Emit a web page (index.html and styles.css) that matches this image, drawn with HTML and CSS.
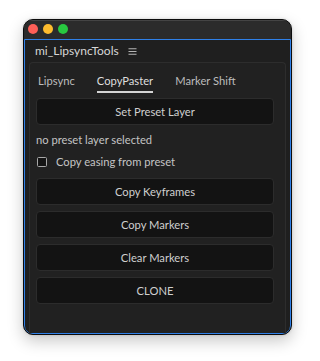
FILE: index.html
```html
<!DOCTYPE html>
<html lang="en">
<head>
<meta charset="utf-8">
<title>mi_LipsyncTools</title>
<link rel="stylesheet" href="styles.css">
</head>
<body>
<div class="stage">
  <div class="window">
    <div class="titlebar">
      <span class="light red"></span>
      <span class="light yellow"></span>
      <span class="light green"></span>
    </div>
    <div class="frame">
      <div class="panel-header">
        <span class="panel-title">mi_LipsyncTools</span>
        <svg class="menu-icon" width="9" height="7" viewBox="0 0 9 7">
          <path d="M0.5 0.75H8.5M0.5 3.5H8.5M0.5 6.25H8.5" stroke="#b4b4b4" stroke-width="1.1" fill="none"/>
        </svg>
      </div>
      <div class="content">
        <div class="tabs">
          <span class="tab">Lipsync</span>
          <span class="tab active">CopyPaster</span>
          <span class="tab">Marker Shift</span>
        </div>
        <button class="btn first">Set Preset Layer</button>
        <div class="status">no preset layer selected</div>
        <label class="check-row">
          <span class="checkbox"></span>
          <span class="check-label">Copy easing from preset</span>
        </label>
        <button class="btn after-check">Copy Keyframes</button>
        <button class="btn">Copy Markers</button>
        <button class="btn">Clear Markers</button>
        <button class="btn">CLONE</button>
      </div>
    </div>
  </div>
</div>
</body>
</html>
```

FILE: styles.css
```css
html, body {
  margin: 0;
  padding: 0;
  background: #ffffff;
}

body {
  font-family: "Lato", "Noto Sans", sans-serif;
  font-size: 11.2px;
  width: 315px;
  height: 361px;
  overflow: hidden;
}

.stage {
  padding: 19px 0 0 23px;
}

.window {
  width: 267px;
  height: 314px;
  border: 1px solid #0c0c0c;
  border-radius: 10px;
  background: #2a2a2a;
  box-shadow: 0 6px 16px rgba(0, 0, 0, 0.22), 0 0 3px rgba(0, 0, 0, 0.15);
  display: flex;
  flex-direction: column;
  overflow: hidden;
}

.titlebar {
  height: 19px;
  flex: none;
  display: flex;
  align-items: flex-start;
  gap: 5px;
  padding: 4px 0 0 4px;
  box-sizing: border-box;
  background: #2b2b2b;
  box-shadow: inset 0 1px 0 #444444;
}

.light {
  width: 10px;
  height: 10px;
  border-radius: 50%;
}
.red { background: #fe5f57; }
.yellow { background: #febc2e; }
.green { background: #28c840; }

.frame {
  flex: 1;
  border: 1.5px solid #2f80e8;
  border-radius: 0 0 8px 8px;
  background: #1f1f1f;
  display: flex;
  flex-direction: column;
  min-height: 0;
}

.panel-header {
  height: 22px;
  flex: none;
  display: flex;
  align-items: center;
  gap: 9px;
  padding-left: 10px;
  color: #d6d6d6;
}

.panel-title {
  font-size: 12px;
  line-height: 14px;
}

.menu-icon {
  display: block;
  margin-top: 1px;
}

.content {
  flex: 1;
  margin: 0 4px;
  border: 1px solid #2d2d2d;
  border-bottom: none;
  border-radius: 4px 4px 0 0;
  background: #212121;
  padding: 0 11px 0 6px;
  display: flex;
  flex-direction: column;
}

.tabs {
  display: flex;
  gap: 22px;
  padding-left: 2px;
}

.tab {
  padding: 11px 0 3px;
  line-height: 14px;
  color: #bcbcbc;
  border-bottom: 2px solid transparent;
}

.tab.active {
  color: #dedede;
  border-bottom-color: #d4d4d4;
}

.btn {
  display: block;
  width: 100%;
  height: 27px;
  margin: 6px 0 0;
  padding: 0;
  border: 1px solid #2c2c2c;
  border-radius: 4px;
  background: #131313;
  color: #cfcfcf;
  font-family: inherit;
  font-size: 11.2px;
  text-align: center;
}

.btn.first { margin-top: 5px; }
.btn.after-check { margin-top: 9px; }

.status {
  margin-top: 8px;
  line-height: 14px;
  color: #c4c4c4;
}

.check-row {
  margin-top: 8px;
  display: flex;
  align-items: center;
  gap: 9px;
  height: 14px;
  padding-left: 1px;
  color: #c4c4c4;
}

.checkbox {
  width: 8px;
  height: 8px;
  border: 1.5px solid #a8a8a8;
  border-radius: 1.5px;
  background: #141414;
}

.check-label {
  line-height: 14px;
}
```
